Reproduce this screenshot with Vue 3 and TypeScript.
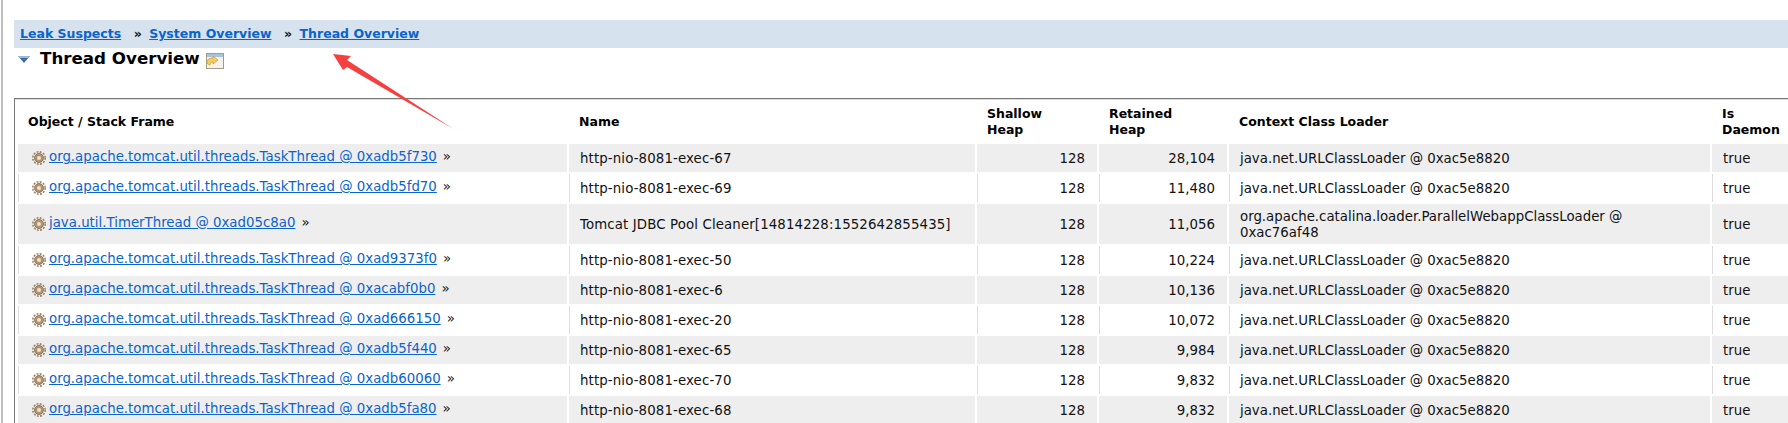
<script setup lang="ts">
interface Row { obj: string; name: string; ret: string; loader: string }
const tt = 'org.apache.tomcat.util.threads.TaskThread @ '
const url = 'java.net.URLClassLoader @ 0xac5e8820'
const rows: Row[] = [
  { obj: tt + '0xadb5f730', name: 'http-nio-8081-exec-67', ret: '28,104', loader: url },
  { obj: tt + '0xadb5fd70', name: 'http-nio-8081-exec-69', ret: '11,480', loader: url },
  { obj: 'java.util.TimerThread @ 0xad05c8a0', name: 'Tomcat JDBC Pool Cleaner[14814228:1552642855435]', ret: '11,056', loader: 'org.apache.catalina.loader.ParallelWebappClassLoader @ 0xac76af48' },
  { obj: tt + '0xad9373f0', name: 'http-nio-8081-exec-50', ret: '10,224', loader: url },
  { obj: tt + '0xacabf0b0', name: 'http-nio-8081-exec-6', ret: '10,136', loader: url },
  { obj: tt + '0xad666150', name: 'http-nio-8081-exec-20', ret: '10,072', loader: url },
  { obj: tt + '0xadb5f440', name: 'http-nio-8081-exec-65', ret: '9,984', loader: url },
  { obj: tt + '0xadb60060', name: 'http-nio-8081-exec-70', ret: '9,832', loader: url },
  { obj: tt + '0xadb5fa80', name: 'http-nio-8081-exec-68', ret: '9,832', loader: url },
]
</script>

<template>
  <div class="page">
    <nav class="crumbs">
      <a href="#">Leak Suspects</a><span class="sep">»</span><a href="#">System Overview</a><span class="sep">»</span><a href="#">Thread Overview</a>
    </nav>
    <div class="heading">
      <svg class="twisty" width="12" height="7" viewBox="0 0 12 7"><path d="M0 0H12L6 7Z" fill="#3f6d9e" /><path d="M0 0H12L10 2H2Z" fill="#9db9d6" /></svg>
      <h2>Thread Overview</h2>
      <svg class="win" width="18" height="16" viewBox="0 0 18 16">
        <rect x="0.5" y="0.5" width="17" height="15" fill="#f4f2ea" stroke="#a39c84" />
        <rect x="1" y="1" width="16" height="3" fill="#a9c3dc" />
        <path d="M1 9c0-3 3-4 6-4V3l5 4-5 4V9c-2 0-3 1-3 3-2-.5-3-1.500-3-3Z" fill="#f2cc62" stroke="#c99a30" stroke-width="0.7" />
      </svg>
    </div>
    <div class="frame">
      <table>
        <colgroup>
          <col class="c1" /><col class="c2" /><col class="c3" /><col class="c4" /><col class="c5" /><col class="c6" />
        </colgroup>
        <thead>
          <tr>
            <th>Object / Stack Frame</th>
            <th>Name</th>
            <th>Shallow<br />Heap</th>
            <th>Retained<br />Heap</th>
            <th>Context Class Loader</th>
            <th>Is<br />Daemon</th>
          </tr>
        </thead>
        <tbody>
          <tr v-for="(r, i) in rows" :key="i" :class="{ odd: i % 2 === 0 }">
            <td class="obj">
              <svg class="gear" width="14" height="14" viewBox="0 0 14 14">
                <circle cx="7" cy="7" r="6.2" fill="none" stroke="#9a8268" stroke-width="1.6" stroke-dasharray="1.9 1.350" />
                <circle cx="7" cy="7" r="4.500" fill="#b3936c" stroke="#7e6750" stroke-width="0.8" />
                <circle cx="7" cy="7" r="2" fill="#ece2d0" />
              </svg><a href="#">{{ r.obj }}</a><span class="more">»</span>
            </td>
            <td class="name">{{ r.name }}</td>
            <td class="num">128</td>
            <td class="num">{{ r.ret }}</td>
            <td class="loader">{{ r.loader }}</td>
            <td>true</td>
          </tr>
        </tbody>
      </table>
    </div>
    <svg class="arrow" width="128" height="84" viewBox="0 0 128 84">
      <path d="M3 4L21 6L17 10L123.500 79L17 17L13 20Z" fill="#f63f3f" />
    </svg>
  </div>
</template>

<style>
html, body { margin: 0; background: #fff; overflow: hidden; }
</style>

<style scoped>
.page {
  position: relative;
  width: 1788px;
  height: 423px;
  overflow: hidden;
  box-sizing: border-box;
  padding: 20px 0 0 14px;
  background: #fff;
  font-family: "DejaVu Sans", Verdana, sans-serif;
  font-size: 13.33px;
  color: #111;
}
.page::before {
  content: "";
  position: absolute;
  left: 1px;
  top: 0;
  bottom: 0;
  width: 2px;
  background: #bdbdbd;
}
a { color: #0b63cc; }
.crumbs {
  height: 28px;
  box-sizing: border-box;
  padding: 5px 0 0 6px;
  background: #d6e3ef;
  font-weight: 700;
  font-size: 12.5px;
  line-height: 17px;
  white-space: nowrap;
}
.sep { margin: 0 7.5px 0 12.5px; color: #111; }
.heading {
  display: flex;
  align-items: center;
  height: 20px;
  padding-left: 4px;
}
.twisty { margin: 2px 3px 0 0; }
h2 {
  margin: 0 6px 0 7px;
  font-size: 16.7px;
  font-weight: 700;
  color: #000;
}
.win { margin-top: 6px; }
.frame {
  margin: 30px 0 0 0;
  border-left: 1px solid #777;
  border-top: 1px solid #777;
  box-shadow: inset 0 1px 0 #ddd;
}
table {
  border-collapse: separate;
  border-spacing: 2px;
  table-layout: fixed;
  width: 1897px;
  margin-left: 1px;
}
.c1 { width: 549px; } .c2 { width: 406px; } .c3 { width: 120px; }
.c4 { width: 128px; } .c5 { width: 481px; } .c6 { width: 199px; }
th {
  height: 41px;
  padding: 0 0 0 10px;
  text-align: left;
  font-weight: 700;
  font-size: 12.5px;
  line-height: 16px;
  color: #000;
}
td {
  height: 28px;
  box-sizing: border-box;
  padding: 5px 0 3px 10px;
  border-left: 1px solid #ddd;
  line-height: 16px;
}
tr.odd td { background: #eee; border-left-color: #eee; }
td.obj { padding: 3px 0 5px 13px; }
td.name { letter-spacing: 0.12px; }
td.loader { padding-right: 60px; }
td.num { text-align: right; padding: 2px 12px 0 0; }
.gear { vertical-align: -4px; margin-right: 3px; }
.more { margin-left: 6px; }
.arrow { position: absolute; left: 330px; top: 50px; }
</style>
